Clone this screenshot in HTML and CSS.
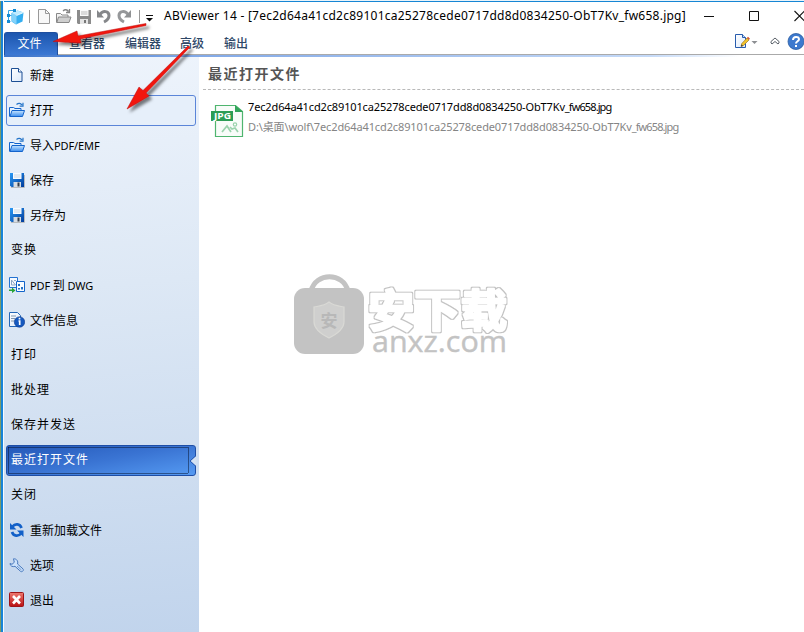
FILE: index.html
```html
<!DOCTYPE html>
<html lang="zh-CN">
<head>
<meta charset="utf-8">
<title>ABViewer 14</title>
<link rel="stylesheet" href="styles.css">
</head>
<body>
<svg width="0" height="0" class="defs" aria-hidden="true">
  <defs>
    <linearGradient id="folderFill" x1="0" y1="0" x2="0" y2="1"><stop offset="0" stop-color="#c9e6ff"/><stop offset="1" stop-color="#3a8cee"/></linearGradient>
    <linearGradient id="diskFill" x1="0" y1="0" x2="1" y2="1"><stop offset="0" stop-color="#2b9af5"/><stop offset="1" stop-color="#003c9c"/></linearGradient>
    <linearGradient id="redFill" x1="0" y1="0" x2="0" y2="1"><stop offset="0" stop-color="#ef7a70"/><stop offset="1" stop-color="#b80f12"/></linearGradient>
    <linearGradient id="pageFill" x1="0" y1="0" x2="1" y2="1"><stop offset="0" stop-color="#fff"/><stop offset="1" stop-color="#dbe9fb"/></linearGradient>
    <filter id="arrowShade" x="-20%" y="-40%" width="140%" height="200%"><feDropShadow dx="3" dy="3" stdDeviation="1.6" flood-color="#000" flood-opacity=".5"/></filter>
    <filter id="greyEdge" x="-5%" y="-10%" width="110%" height="120%"><feMorphology in="SourceAlpha" operator="dilate" radius="1" result="fat"/><feFlood flood-color="#c3c3c3"/><feComposite in2="fat" operator="in"/><feMerge><feMergeNode/><feMergeNode in="SourceGraphic"/></feMerge></filter>
    <symbol id="folder" viewBox="0 0 16 16">
      <path d="M.5 14.500V5.500h4l1.500 1h6v2" fill="#e4f2ff" stroke="#1464cc"/>
      <path d="M3 8.500h12.500l-2 6H1z" fill="url(#folderFill)" stroke="#1464cc"/>
      <path d="M7.500 2.500c2-1.800 4-1.500 5.500.5M14 .8v3.400h-3.400" fill="none" stroke="#2474c8" stroke-width="1.200"/>
    </symbol>
    <symbol id="disk" viewBox="0 0 16 16">
      <path d="M2 15.500h13.500V3" fill="none" stroke="#b9bcbf"/>
      <path d="M1 1h14v14H2.500L1 13.500z" fill="url(#diskFill)"/>
      <path d="M4 1h8.500v6H4z" fill="#f8fbff"/><path d="M5 3h6.500M5 5h6.500" stroke="#ccd6e1"/>
      <path d="M4.500 10h7.500v5H4.500z" fill="#d7dce2"/><path d="M8.500 10.500h2v4h-2z" fill="#333c4a"/>
    </symbol>
  </defs>
</svg>
<div class="window">
  <header class="titlebar">
    <svg class="logo" width="17" height="17" viewBox="0 0 17 17">
      <path d="M4.500 5l6-2.500 6 2-1 9-6.500 3-4.500-3z" fill="#34aef0"/><path d="M4.500 5l5 2.500v9l-4.500-3z" fill="#83d2fa"/><path d="M4.500 5l6-2.500 6 2-7 3z" fill="#bdeaff"/><path d="M9.500 7.500l7-3" stroke="#e9f9ff"/>
      <path d="M3.500 13.500H1.500v-11H7M1.500 7.500h3" fill="none" stroke="#34a5e6"/><path d="M6 1h3v3H6zM0 6h3v3H0zM0 12h3v3H0z" fill="#168cd4"/>
    </svg>
    <i class="sep sep-a"></i>
    <svg class="q-new" width="12" height="15" viewBox="0 0 12 15"><path d="M.5.5h7l4 4v10H.5z" fill="#f8f8f8" stroke="#999"/><path d="M7.500.5v4h4" fill="none" stroke="#999"/></svg>
    <svg class="q-open" width="16" height="16" viewBox="0 0 16 16"><path d="M.5 14.500v-9h4l1.500 1.500h6v2" fill="#f2f2f2" stroke="#888"/><path d="M2.500 9h12.500l-2 5.500H.8z" fill="#cecece" stroke="#888"/><path d="M7 3c2-2 4-1.500 5.500.5M13.500 1v3.500H10" fill="none" stroke="#858585" stroke-width="1.300"/></svg>
    <svg class="q-save" width="15" height="15" viewBox="0 0 15 15"><path d="M0 1h14v14H1L0 14z" fill="#8b8b8b"/><path d="M3 1h8.500v6H3z" fill="#fafafa"/><path d="M4 3h6.500M4 5h6.500" stroke="#bbb"/><path d="M3 10h8v5H3z" fill="#e4e4e4"/><path d="M7 11h2v3H7z" fill="#777"/></svg>
    <svg class="q-undo" width="14" height="15" viewBox="0 0 14 15"><path d="M3 5.500C6 1 12 2 12 6.500c0 3-2 5-5 6.500" fill="none" stroke="#85878a" stroke-width="3"/><path d="M0 1v7.500h7z" fill="#85878a"/></svg>
    <svg class="q-redo" width="14" height="15" viewBox="0 0 14 15"><path d="M11 5.500C8 1 2 2 2 6.500c0 3 2 5 5 6.500" fill="none" stroke="#96989a" stroke-width="3"/><path d="M14 1v7.500H7z" fill="#909294"/></svg>
    <i class="sep sep-b"></i>
    <svg class="q-more" width="7" height="7" viewBox="0 0 7 7"><path d="M0 .5h7" stroke="#111"/><path d="M0 3h7L3.500 6.500z" fill="#111"/></svg>
    <h1 class="title">ABViewer 14 - [7ec2d64a41cd2c89101ca25278cede0717dd8d0834250-ObT7Kv_fw658.jpg]</h1>
    <svg class="controls" width="100" height="12" viewBox="0 0 100 12"><path d="M0 6.500h10M45.500 1.500h9v9h-9z" fill="none" stroke="#111"/><path d="M90.500 1l10 10M100.500 1l-10 10" stroke="#111" stroke-width="1.100"/></svg>
  </header>
  <nav class="ribbon">
    <span class="file-tab">文件</span>
    <span class="tab">查看器</span><span class="tab">编辑器</span><span class="tab">高级</span><span class="tab">输出</span>
    <svg class="tools" width="70" height="17" viewBox="0 0 70 17">
      <path d="M1.500 1.500h7l3 3v10h-10z" fill="url(#pageFill)" stroke="#285cad"/><path d="M8.500 1.500v3h3" fill="#c3daf6" stroke="#285cad"/>
      <path d="M7 13.500l.8-3L13 5l2 2-5.500 5.500z" fill="#f2c32b" stroke="#9b772c" stroke-width=".7"/><path d="M13 4.800l1-1 2 2-1 1z" fill="#d4502e"/><path d="M7 13.500l.5-2L9 13z" fill="#333"/>
      <path d="M17.500 8h6l-3 3z" fill="#8c8f92"/>
      <path d="M37 8.500l4-3.500 4 3.500v1.500l-1 1-3-2.500-3 2.500-1-1z" fill="#fff" stroke="#5a6169"/>
      <circle cx="62" cy="8.500" r="8" fill="#3d79ce" stroke="#285a9f" stroke-width=".8"/>
      <path d="M59 7c0-4 6-4 6-.8 0 2-3 2.200-3 4.300M62 12v2" fill="none" stroke="#fff" stroke-width="2"/>
    </svg>
  </nav>
  <div class="blue-rule"></div>
  <div class="body">
    <aside class="menu">
      <div class="item"><svg width="16" height="16" viewBox="0 0 16 16"><path d="M2.500 1.500h7l3.500 3.500v9.500H2.500z" fill="url(#pageFill)" stroke="#1c4f94"/><path d="M9.500 1.500V5H13" fill="#fff" stroke="#1c4f94"/></svg><span>新建</span></div>
      <div class="item hover"><svg width="16" height="16"><use href="#folder"/></svg><span>打开</span></div>
      <div class="item"><svg width="16" height="16"><use href="#folder"/></svg><span>导入<b class="latin">PDF/EMF</b></span></div>
      <div class="item"><svg width="16" height="16"><use href="#disk"/></svg><span>保存</span></div>
      <div class="item"><svg width="16" height="16"><use href="#disk"/></svg><span>另存为</span></div>
      <div class="item plain"><span>变换</span></div>
      <div class="item"><svg width="16" height="16" viewBox="0 0 16 16"><path d="M.5.5h8v10h-8z" fill="#f5faff" stroke="#2272d2"/><path d="M2.500 3v5h4zM5 3.500h2" fill="none" stroke="#8da7c3"/><path d="M7.500 4.500h8v10h-8z" fill="#f8fcff" stroke="#1264ca"/><path d="M9 7h2v2H9zM9 11h2v1.500H9zM12 10h2v2.500h-2z" fill="#2572c7"/><path d="M0 12.500h3V10.500l3.500 3-3.500 2.500v-2H0z" fill="#26a336"/></svg><span><b class="latin">PDF</b> 到 <b class="latin">DWG</b></span></div>
      <div class="item"><svg width="16" height="16" viewBox="0 0 16 16"><path d="M.5.500h8l3 3v11H.5z" fill="url(#pageFill)" stroke="#2467b6"/><path d="M2 4h5M2 6.500h4M2 9h3" stroke="#8297b0"/><circle cx="10.500" cy="10" r="5.200" fill="#1559bf" stroke="#0c398d" stroke-width=".6"/><path d="M10.500 5.800v1.800M9.500 9h1.200v4" fill="none" stroke="#fff" stroke-width="1.700"/></svg><span>文件信息</span></div>
      <div class="item plain"><span>打印</span></div>
      <div class="item plain"><span>批处理</span></div>
      <div class="item plain"><span>保存并发送</span></div>
      <div class="item plain selected"><span>最近打开文件</span>
        <svg class="selection" width="191" height="32" viewBox="0 0 191 32"><path d="M190.500 10.500l-6 5.500 6 5.500z" fill="#d4e2f3"/><path d="M190 10.500l-6 5.500 6 5.500" fill="none" stroke="#2456b0"/><path d="M2.500 2.500h180M2.500 28.500h180M2.500 2.500v26M182.500 2.500v26" fill="none" stroke="#06122c" stroke-dasharray="1 1"/></svg>
      </div>
      <div class="item plain"><span>关闭</span></div>
      <div class="item"><svg width="16" height="16" viewBox="0 0 16 16"><path d="M3.500 4.500C6 1.300 11 1.500 12.500 6M12 11.500C9.500 14.700 4.500 14.500 3 10" fill="none" stroke="#1260c8" stroke-width="2.700"/><path d="M1 1v6.500h6.500zM14.500 15V8.500H8z" fill="#1260c8"/></svg><span>重新加载文件</span></div>
      <div class="item"><svg width="16" height="16" viewBox="0 0 16 16"><path d="M4.500 1.800l.8 3.500-2.300 2-2-.8c0 2.500 2.800 3.800 5 2.800l5.500 5c1.500 1.200 3.700-.8 2.500-2.400L8.500 7c1-2.800-1-5.500-4-5.200z" fill="#cce2fb" stroke="#4778bd"/><path d="M8 9l4.500 4" stroke="#7198cf"/></svg><span>选项</span></div>
      <div class="item"><svg width="16" height="16" viewBox="0 0 16 16"><rect x=".5" y=".5" width="14" height="14" rx="1" fill="url(#redFill)" stroke="#9c1418"/><path d="M4 4l7 7.500M11 4l-7 7.500" stroke="#fff" stroke-width="2.600"/></svg><span>退出</span></div>
    </aside>
    <main class="content">
      <h2>最近打开文件</h2>
      <div class="file">
        <svg width="34" height="34" viewBox="0 0 34 34"><path d="M5.500 2.500h20l7 6v25h-27z" fill="#f8fcf9" stroke="#4fb56f" stroke-width="1.200"/><path d="M25 2l8 7h-8z" fill="#34a55c"/><path d="M1 8h22v10H1z" fill="#2c9d55"/><text x="4" y="16.300" class="badge" textLength="17" lengthAdjust="spacingAndGlyphs">JPG</text><path d="M12 29l5-6 4 6M20 24l2 2 3-1 3 4" fill="none" stroke="#9bd3ad" stroke-width="1.700"/><circle cx="25" cy="21.500" r="1.700" fill="none" stroke="#9bd3ad" stroke-width="1.200"/></svg>
        <div class="file-text">
          <div class="name">7ec2d64a41cd2c89101ca25278cede0717dd8d0834250-ObT7Kv<span class="tight">_fw658.jpg</span></div>
          <div class="path"><span class="drive">D:\桌面\wolf\</span>7ec2d64a41cd2c89101ca25278cede0717dd8d0834250-ObT7Kv<span class="tight">_fw658.jpg</span></div>
        </div>
      </div>
    </main>
  </div>
  <svg class="watermark" width="230" height="96" viewBox="0 0 230 96">
    <path d="M19 20C24 1 51 1 56 20" fill="none" stroke="#c3c3c3" stroke-width="5"/>
    <rect x="2" y="17" width="70" height="66" rx="11" fill="#c3c3c3"/>
    <path d="M37 31c5 4 10 4 15 5v15c0 7-7 12-15 16-8-4-15-9-15-16V36c5-1 10-1 15-5z" fill="#cfcfce" stroke="#d9d9d5" stroke-width="1.200"/>
    <text x="28.500" y="56" class="shield">安</text>
    <text x="76" y="56" class="outline" textLength="139" lengthAdjust="spacingAndGlyphs" filter="url(#greyEdge)">安下载</text>
    <text x="80" y="81" class="domain" textLength="135" lengthAdjust="spacingAndGlyphs">anxz.com</text>
  </svg>
  <svg class="arrows" width="804" height="632" viewBox="0 0 804 632">
    <g fill="#f21511" stroke="#b80f0c" stroke-width=".5" filter="url(#arrowShade)">
      <path d="M146 23.500L78 36l-1-5L53 41.500l28 1.500-1-4L146 25.500z"/>
      <path d="M188 46L143 90.500l-4-3.500L127 109l22-13-3-3L190 47z"/>
    </g>
  </svg>
</div>
</body>
</html>
```
FILE: styles.css
```css
* { box-sizing: border-box; }
body { margin: 0; overflow: hidden; background: #fff; font-family: "Noto Sans", "Noto Sans CJK SC", sans-serif; font-size: 12px; color: #000; }
svg { display: block; flex: none; }
.defs { position: absolute; }
.window { position: relative; width: 804px; height: 632px; border-top: 1px solid #eaf4fa; overflow: hidden; }
.window::before { content: ""; position: absolute; left: 0; top: 0; width: 4px; height: 632px; background: linear-gradient(90deg, #789b6b 1px, #1784d8 1px 3px, #f4faff 3px); z-index: 1; }
.titlebar { height: 31px; border-top: 1px solid #1686d4; display: flex; align-items: center; padding: 0 0 2px 7px; }
.sep { width: 1px; height: 13px; background: #999; }
.sep-a { margin-left: 5px; }
.q-new { margin-left: 8px; }
.q-open { margin-left: 6px; }
.q-save { margin-left: 5px; }
.q-undo { margin-left: 5px; }
.q-redo { margin-left: 6px; }
.sep-b { margin-left: 8px; }
.q-more { margin: 4px 0 0 6px; }
.title { margin: 0 0 0 11px; width: 524px; white-space: nowrap; font: 400 12px/20px "Noto Sans", sans-serif; letter-spacing: .25px; }
.controls { margin-left: 18px; overflow: visible; }
.ribbon { height: 23px; padding-left: 4px; border-bottom: 1px solid #aaa; display: flex; align-items: center; position: relative; }
.file-tab { width: 54px; height: 23px; align-self: flex-start; border: 1px solid #1e4f9f; border-bottom: 0; border-radius: 3px 3px 0 0; background: linear-gradient(#1c56ae, #3b78d4); color: #fff; text-align: center; line-height: 22px; padding-right: 3px; }
.tab { margin-left: 20px; color: #2e4767; font-weight: 500; line-height: 22px; font-family: "Noto Sans CJK SC", sans-serif; }
.file-tab + .tab { margin-left: 11px; }
.tab:nth-child(4) { margin-left: 19px; }
.tools { margin: -3px 0 0 auto; }
.blue-rule { height: 2px; background: linear-gradient(90deg, #3972c9 0, #82a9e7 200px, #c5daf8 650px, #fff 740px); }
.body { display: flex; height: 575px; }
.menu { width: 199px; padding: 3px 3px 0 6px; background: linear-gradient(175deg, #eef4fc 0%, #dde8f5 40%, #c1d4ec 100%); }
.item { width: 190px; height: 31px; margin-bottom: 4px; display: flex; align-items: center; gap: 5px; padding: 0 0 2px 3px; white-space: nowrap; line-height: 18px; font-family: "Noto Sans CJK SC", sans-serif; }
.plain { padding-left: 5px; padding-bottom: 4px; letter-spacing: 1px; }
.latin { font: 400 11px "Noto Sans", sans-serif; letter-spacing: -.1px; }
.hover { border: 1px solid #5b85d8; border-radius: 3px; padding-left: 2px; background: #e6effa; }
.selected { position: relative; border: 1px solid #1e4ea6; border-radius: 3px; padding-left: 4px; color: #fff; background: linear-gradient(170deg, #2458b8, #3a74d3 50%, #559af2); }
.selection { position: absolute; left: -1px; top: -1px; }
.content { flex: 1; min-width: 0; padding-left: 4px; }
h2 { height: 33px; margin: 0; padding-left: 5px; border-bottom: 1px dashed #b9b9b9; font: 700 14px/32px "Noto Sans CJK SC", sans-serif; color: #555; letter-spacing: 1.500px; }
.file { display: flex; padding: 8px 0 0 7px; }
.file > svg { margin-top: 5px; }
.file-text { margin: -1px 0 0 4px; white-space: nowrap; font: 11px/20px "Noto Sans", "Noto Sans CJK SC", sans-serif; letter-spacing: -.14px; }
.name, .path { height: 20px; }
.path { color: #858585; letter-spacing: -.12px; }
.tight { letter-spacing: -.9px; }
.badge { font: 700 9px "Open Sans", sans-serif; fill: #fff; letter-spacing: 0; }
.watermark { position: absolute; left: 292px; top: 270px; }
.shield { font: 700 17px "Noto Sans CJK SC", sans-serif; fill: #b8b8b8; }
.outline { font: 700 44px "Noto Sans CJK SC", sans-serif; stroke-linejoin: round; fill: #fff; stroke: #fff; stroke-width: 2.500px; }
.domain { font: 500 29px "Open Sans", sans-serif; fill: #c3c3c3; stroke: #c3c3c3; stroke-width: .4px; }
.arrows { position: absolute; left: 0; top: -1px; z-index: 2; pointer-events: none; }
```
